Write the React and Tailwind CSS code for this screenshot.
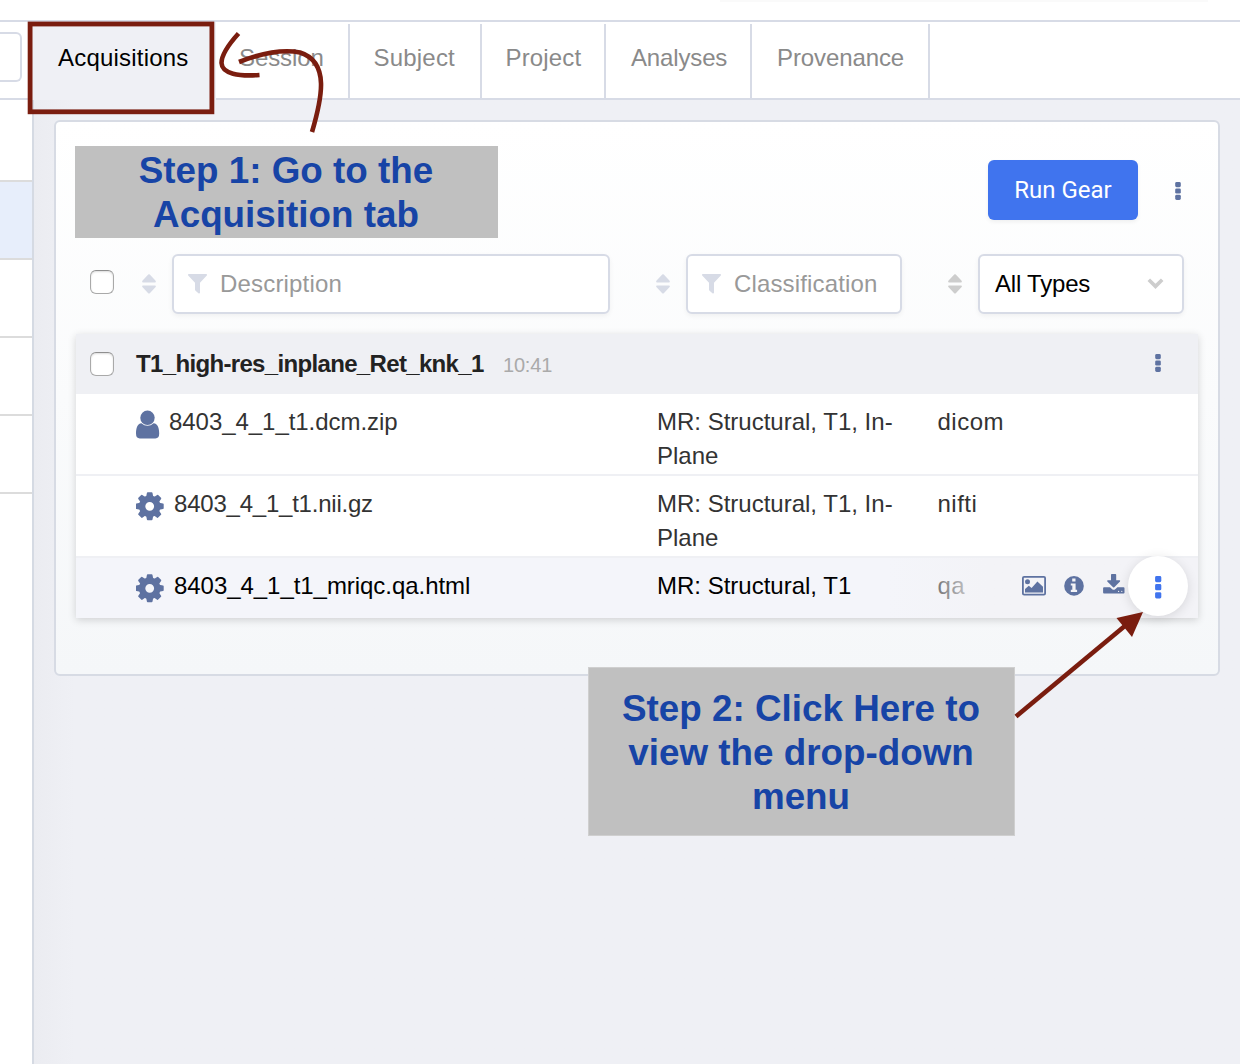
const TABS = [
  { label: 'Session', cls: 'w-[134px] pl-[23px] tracking-[-0.1px]' },
  { label: 'Subject', cls: 'w-[132px] pl-[23.5px] tracking-[0.2px]' },
  { label: 'Project', cls: 'w-[124px] pl-[23.5px] tracking-[0.15px]' },
  { label: 'Analyses', cls: 'w-[146px] pl-[25px] tracking-[-0.15px]' },
  { label: 'Provenance', cls: 'w-[178px] pl-[25px] tracking-[-0.1px]' },
];

function Sorter({ className }) {
  return (
    <svg className={`mb-px h-5 w-[14px] shrink-0 ${className}`} viewBox="0 0 14 20" fill="currentColor">
      <path d="M6.2 .6Q7-.1 7.8.6L13.6 6.8Q14.3 8.4 13 8.4H1Q-.3 8.4.4 6.8Z" />
      <path d="M6.2 19.2Q7 19.9 7.8 19.2L13.6 13Q14.3 11.4 13 11.4H1Q-.3 11.4.4 13Z" />
    </svg>
  );
}

function Funnel() {
  return (
    <svg className="h-5 w-[19px] shrink-0 text-[#d7dbe6]" viewBox="0 0 19 20" fill="currentColor">
      <path d="M.8 0H18.2Q19.5.4 18.8 1.4L12 8.8V18.8Q11.6 20 10.4 19.2L7.6 16.8Q7 16.3 7 15.5V8.8L.2 1.4Q-.5.4.8 0Z" />
    </svg>
  );
}

function Dots({ className }) {
  return (
    <svg className={`h-[18px] w-[6px] ${className}`} viewBox="0 0 6 18" fill="#5e72a1">
      <rect width="5.6" height="5.2" rx="1.4" x=".2" y="0" />
      <rect width="5.6" height="5.2" rx="1.4" x=".2" y="6.4" />
      <rect width="5.6" height="5.2" rx="1.4" x=".2" y="12.8" />
    </svg>
  );
}

function Checkbox({ className }) {
  return (
    <span
      className={`h-6 w-6 shrink-0 rounded-[6px] border border-[#a9a9a9] border-t-[#8f8f8f] bg-white shadow-[inset_0_1px_2px_rgba(0,0,0,0.14)] ${className}`}
    />
  );
}

function UserIcon() {
  return (
    <svg className="mt-[16px] h-[29px] w-[24px] shrink-0" viewBox="0 0 24 29" fill="#5e72a1">
      <circle cx="11.5" cy="7.8" r="7.2" />
      <path d="M5.4 13.2Q8.2 15.8 11.5 15.8T17.6 13.2C21.8 13.7 23.2 18 23.2 23.6Q23.2 28.5 19.4 28.5H3.8Q0 28.5 0 23.6C0 18 1.4 13.7 5.4 13.2Z" />
    </svg>
  );
}

function GearIcon() {
  return (
    <svg className="mt-[16px] h-[29px] w-[29px] shrink-0" viewBox="0 0 29 29" fill="#5e72a1">
      <circle cx="13.7" cy="14.3" r="7.6" fill="none" stroke="#5e72a1" strokeWidth="6.4" />
      {[0, 45, 90, 135, 180, 225, 270, 315].map((a) => (
        <path key={a} d="M9.9 6L10.9 1Q11 .3 11.7.3H15.7Q16.4.3 16.5 1L17.5 6Z" transform={`rotate(${a} 13.7 14.3)`} />
      ))}
    </svg>
  );
}

function PictureIcon() {
  return (
    <svg className="h-5 w-6" viewBox="0 0 24 20" fill="#5e72a1">
      <rect x=".9" y=".9" width="22.2" height="17.8" rx="1.2" fill="none" stroke="#5e72a1" strokeWidth="1.8" />
      <circle cx="5.5" cy="5.8" r="2.5" />
      <path d="M3 16.6V13L6.8 9.8 9.6 12 15.4 5.4 21 10.8V16.6Z" />
    </svg>
  );
}

function InfoIcon() {
  return (
    <svg className="h-5 w-5" viewBox="0 0 20 20">
      <circle cx="10" cy="9.9" r="9.8" fill="#5e72a1" />
      <path d="M8.2 2.6H11.5V5.4H8.2ZM6.8 7.4H11.6V13.8H13.1V16H6.8V13.8H8.3V9.5H6.8Z" fill="#f3f3f7" />
    </svg>
  );
}

function DownloadIcon() {
  return (
    <svg className="h-5 w-[22px]" viewBox="0 0 22 20" fill="#5e72a1">
      <path d="M8 .8Q8 0 8.8 0H12.4Q13.2 0 13.2.8V6.2H16.6Q17.6 6.5 17 7.4L11.3 13.2Q10.7 13.7 10.1 13.2L4.3 7.4Q3.8 6.5 4.7 6.2H8Z" />
      <path d="M1 13.2H7L9.2 15.2Q10.7 16.4 12.2 15.2L14.4 13.2H20.6Q21.5 13.2 21.5 14.2V18.6Q21.5 19.6 20.6 19.6H1Q.1 19.6.1 18.6V14.2Q.1 13.2 1 13.2Z" />
      <circle cx="15.6" cy="17.4" r=".6" fill="#f3f3f7" />
      <circle cx="18.8" cy="17.4" r=".6" fill="#f3f3f7" />
    </svg>
  );
}

function FileRow({ icon, name, nameCls, classification, type, rowCls }) {
  return (
    <div className={`flex pl-[60px] ${rowCls}`}>
      <div className="flex w-[521px] shrink-0">
        {icon}
        <span className={`pt-[11px] ${nameCls}`}>{name}</span>
      </div>
      <div className="w-[280px] shrink-0 pt-[11px]">{classification}</div>
      <div className="pt-[11px] pl-[0.5px] tracking-[0.5px]">{type}</div>
    </div>
  );
}

const inputBox =
  'flex h-[60px] shrink-0 items-center rounded-[6px] border-2 border-[#d7dbe6] bg-white shadow-[0_2px_5px_rgba(0,0,0,0.05)]';

export default function App() {
  return (
    <div
      className="relative flex h-[1064px] w-[1240px] flex-col overflow-hidden bg-[#eff0f5] text-[24px] leading-[34px] whitespace-nowrap text-[#333]"
      style={{ fontFamily: '"Liberation Sans", Arial, sans-serif' }}
    >
      <div className="flex h-[22px] shrink-0 justify-end border-b-2 border-[#d7dbe6] bg-white pr-[32px]">
        <div className="h-[2px] w-[488px] bg-[#fafafa]" />
      </div>

      <nav className="flex h-[78px] shrink-0 border-b-2 border-[#d7dbe6] bg-white leading-[36px] text-[#8a8a8a]">
        <div className="mt-[10px] h-[50px] w-[22px] shrink-0 rounded-r-[6px] border-2 border-l-0 border-[#d7dbe6]" />
        <div className="ml-[10px] h-[78px] w-[184px] shrink-0 bg-[#eff0f5] pt-[18px] pl-[26px] tracking-[0.2px] text-black">
          Acquisitions
        </div>
        {TABS.map((t) => (
          <div key={t.label} className={`mt-[2px] shrink-0 border-r-2 border-[#d7dbe6] pt-[16px] ${t.cls}`}>
            {t.label}
          </div>
        ))}
      </nav>

      <div className="flex flex-1">
        <aside className="w-[34px] shrink-0 border-r-2 border-[#d5dae3] bg-white">
          <div className="h-[82px] border-b-2 border-[#dcdcdc]" />
          <div className="h-[78px] border-b-2 border-[#dcdcdc] bg-[#e7eefb]" />
          <div className="h-[78px] border-b-2 border-[#dcdcdc]" />
          <div className="h-[78px] border-b-2 border-[#dcdcdc]" />
          <div className="h-[78px] border-b-2 border-[#dcdcdc]" />
        </aside>

        <main className="flex-1 bg-linear-to-r from-[#ebecf1] to-[#eff0f5] to-[40px] pt-[20px] pl-[20px]">
          <section className="flex h-[556px] w-[1166px] flex-col rounded-[6px] border-2 border-[#d7dbe4] bg-linear-to-b from-white to-[#f5f7f9] px-[20px]">
            <div className="flex h-[98px] items-center justify-end pt-[38px]">
              <button
                className="h-[60px] w-[150px] rounded-[6px] bg-[#4074ee] pb-[1px] text-white shadow-[0_2px_4px_rgba(0,0,0,0.06)]"
                style={{ fontFamily: 'Roboto, sans-serif' }}
              >
                Run Gear
              </button>
              <Dots className="mt-[2px] mr-[17px] ml-[37px]" />
            </div>

            <div className="mt-[34px] flex h-[60px] items-center">
              <Checkbox className="mb-1 ml-[14px]" />
              <Sorter className="ml-[28px] text-[#d7dbe6]" />
              <div className={`ml-[16px] w-[438px] pl-[14px] ${inputBox}`}>
                <Funnel />
                <span className="ml-[13px] tracking-[0.18px] text-[#999]">Description</span>
              </div>
              <Sorter className="ml-[46px] text-[#d7dbe6]" />
              <div className={`ml-[16px] w-[216px] pl-[14px] ${inputBox}`}>
                <Funnel />
                <span className="ml-[13px] tracking-[0.15px] text-[#999]">Classification</span>
              </div>
              <Sorter className="ml-[46px] text-[#cdcdcd]" />
              <div className={`ml-[16px] w-[206px] justify-between pr-[18px] pl-[15px] tracking-[-0.2px] text-black ${inputBox}`}>
                All Types
                <svg className="h-[12px] w-[17px]" viewBox="0 0 17 12" fill="none" stroke="#cdcdcd" strokeWidth="3.6">
                  <path d="M1.8 1.8L8.5 8.4L15.2 1.8" />
                </svg>
              </div>
            </div>

            <div className="mt-[20px] flex h-[284px] w-[1122px] shrink-0 flex-col bg-white shadow-[0_2px_8px_rgba(0,0,0,0.16)]">
              <div className="flex h-[60px] items-center bg-[#eff0f4] pr-[37px] pl-[14px]">
                <Checkbox />
                <span className="ml-[22px] w-[347px] font-bold tracking-[-0.66px] text-[#222]">T1_high-res_inplane_Ret_knk_1</span>
                <span className="ml-[20px] flex-1 pt-[2px] text-[20px] tracking-[-0.2px] text-[#aaa]">10:41</span>
                <Dots className="mb-[2px]" />
              </div>
              <FileRow
                icon={<UserIcon />}
                name="8403_4_1_t1.dcm.zip"
                nameCls="ml-[9px] tracking-[-0.05px]"
                classification={<>MR: Structural, T1, In-<br />Plane</>}
                type="dicom"
                rowCls="h-[82px] border-b-2 border-[#eff0f4]"
              />
              <FileRow
                icon={<GearIcon />}
                name="8403_4_1_t1.nii.gz"
                nameCls="ml-[9px] tracking-[-0.22px]"
                classification={<>MR: Structural, T1, In-<br />Plane</>}
                type="nifti"
                rowCls="h-[82px] border-b-2 border-[#eff0f4]"
              />
              <div className="relative h-[60px]">
                <FileRow
                  icon={<GearIcon />}
                  name="8403_4_1_t1_mriqc.qa.html"
                  nameCls="ml-[9px] tracking-[-0.05px]"
                  classification="MR: Structural, T1"
                  type="qa"
                  rowCls="h-[60px] bg-[#f4f5fa] text-black"
                />
                <div className="absolute -top-[2px] right-0 flex h-[62px] w-[310px] items-start pl-[134px]">
                  <div className="absolute inset-x-0 top-[2px] bottom-0 bg-linear-to-r from-[#f3f3f7]/0 to-[#f3f3f7] to-[100px]" />
                  <span className="relative mt-[20px]"><PictureIcon /></span>
                  <span className="relative mt-[20px] ml-[18px]"><InfoIcon /></span>
                  <span className="relative mt-[18px] ml-[19px]"><DownloadIcon /></span>
                  <span className="relative ml-[3px] flex h-[60px] w-[60px] justify-center rounded-full bg-white shadow-[0_2px_12px_rgba(0,0,0,0.12)]">
                    <svg className="mt-[19.5px] h-[23px] w-[7px]" viewBox="0 0 7 23" fill="#4074ee">
                      <rect x=".1" y="0" width="6.2" height="6.2" rx="1.4" />
                      <rect x=".1" y="8.1" width="6.2" height="6.2" rx="1.4" />
                      <rect x=".1" y="16.2" width="6.2" height="6.2" rx="1.4" />
                    </svg>
                  </span>
                </div>
              </div>
            </div>
          </section>
        </main>
      </div>

      <div className="absolute top-[146px] left-[75px] h-[92px] w-[423px] bg-[#c0c0c0] pt-[3px] pr-[1px] text-center text-[36.8px] leading-[44px] font-bold text-[#1744a6]">
        Step 1: Go to the
        <br />
        Acquisition tab
      </div>
      <div className="absolute top-[667px] left-[588px] h-[169px] w-[427px] border border-[#cfcfcf] bg-[#c0c0c0] pt-[19px] pr-[1px] text-center text-[36.8px] leading-[44px] font-bold text-[#1744a6]">
        Step 2: Click Here to
        <br />
        view the drop-down
        <br />
        menu
      </div>
      <svg className="pointer-events-none absolute inset-0 h-[1064px] w-[1240px]" viewBox="0 0 1240 1064" fill="none" stroke="#7a1d0f" strokeWidth="4.6">
        <rect x="30.1" y="24" width="181.8" height="87.8" strokeWidth="4.8" />
        <path d="M238.5 33.5C229 44 221.5 54 221.5 63C222 74 239 76.5 259.5 75" />
        <path d="M239 62C262 53 283 49 300 52.5C330 62 322 98 312 132" />
        <path d="M1016 716.5L1126 625" />
        <path d="M1143 612L1116.5 618L1132 637Z" fill="#7a1d0f" stroke="none" />
      </svg>
    </div>
  );
}
